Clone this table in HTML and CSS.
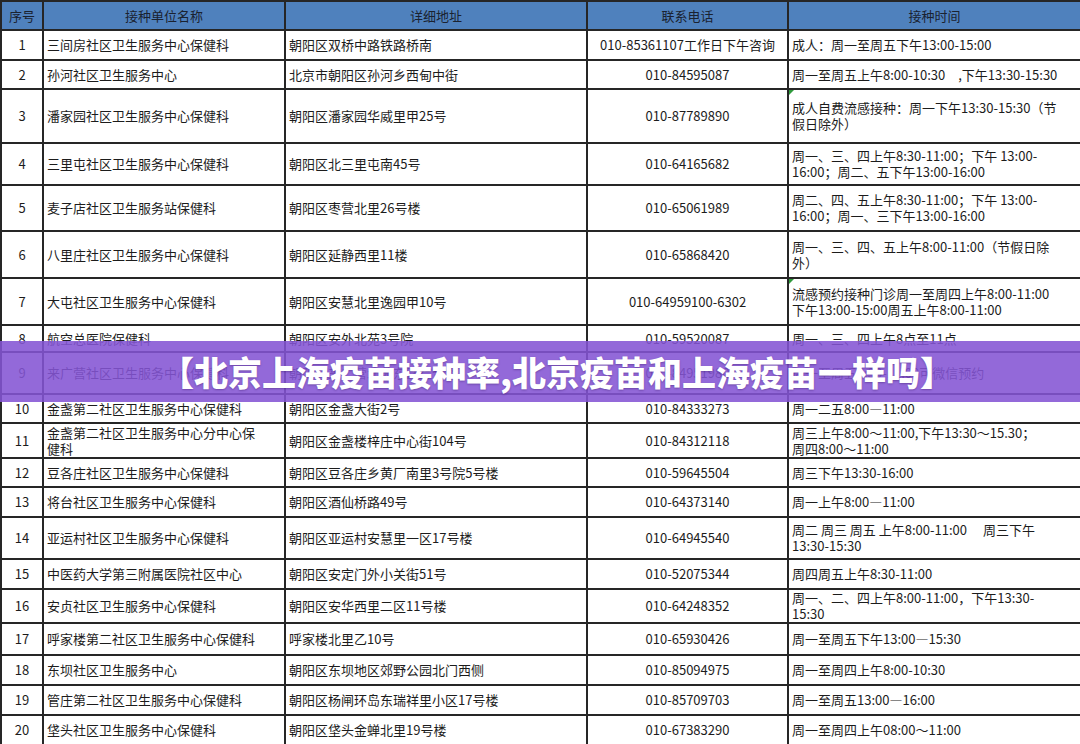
FILE: index.html
```html
<!DOCTYPE html>
<html lang="zh-CN">
<head>
<meta charset="utf-8">
<title>北京上海疫苗接种率</title>
<link rel="stylesheet" href="styles.css">
</head>
<body>
<div class="page">
  <table class="sheet">
    <colgroup>
      <col class="c-no"><col class="c-name"><col class="c-addr"><col class="c-tel"><col class="c-time">
    </colgroup>
    <thead>
      <tr class="h29"><th>序号</th><th>接种单位名称</th><th>详细地址</th><th>联系电话</th><th>接种时间</th></tr>
    </thead>
    <tbody>
      <tr class="h30"><td class="no">1</td><td>三间房社区卫生服务中心保健科</td><td>朝阳区双桥中路铁路桥南</td><td class="tel">010-85361107工作日下午咨询</td><td>成人：周一至周五下午13:00-15:00</td></tr>
      <tr class="h29"><td class="no">2</td><td>孙河社区卫生服务中心</td><td>北京市朝阳区孙河乡西甸中街</td><td class="tel">010-84595087</td><td>周一至周五上午8:00-10:30　,下午13:30-15:30</td></tr>
      <tr class="h54"><td class="no">3</td><td>潘家园社区卫生服务中心保健科</td><td>朝阳区潘家园华威里甲25号</td><td class="tel">010-87789890</td><td class="mark">成人自费流感接种：周一下午13:30-15:30（节<br>假日除外）</td></tr>
      <tr class="h42"><td class="no">4</td><td>三里屯社区卫生服务中心保健科</td><td>朝阳区北三里屯南45号</td><td class="tel">010-64165682</td><td>周一、三、四上午8:30-11:00；下午 13:00-<br>16:00；周二、五下午13:00-16:00</td></tr>
      <tr class="h46"><td class="no">5</td><td>麦子店社区卫生服务站保健科</td><td>朝阳区枣营北里26号楼</td><td class="tel">010-65061989</td><td>周二、四、五上午8:30-11:00；下午 13:00-<br>16:00；周一、三下午13:00-16:00</td></tr>
      <tr class="h47"><td class="no">6</td><td>八里庄社区卫生服务中心保健科</td><td>朝阳区延静西里11楼</td><td class="tel">010-65868420</td><td>周一、三、四、五上午8:00-11:00（节假日除<br>外）</td></tr>
      <tr class="h47"><td class="no">7</td><td>大屯社区卫生服务中心保健科</td><td>朝阳区安慧北里逸园甲10号</td><td class="tel">010-64959100-6302</td><td class="mark">流感预约接种门诊周一至周四上午8:00-11:00<br>下午13:00-15:00周五上午8:00-11:00</td></tr>
      <tr class="h27"><td class="no">8</td><td>航空总医院保健科</td><td>朝阳区安外北苑3号院</td><td class="tel">010-59520087</td><td>周一、三、四上午8点至11点</td></tr>
      <tr class="h42"><td class="no">9</td><td>来广营社区卫生服务中心保健科</td><td>朝阳区来广营北苑东路综合楼</td><td class="tel">010-84951980</td><td>周一至周五8:30-11:00可微信预约</td></tr>
      <tr class="h29"><td class="no">10</td><td>金盏第二社区卫生服务中心保健科</td><td>朝阳区金盏大街2号</td><td class="tel">010-84333273</td><td>周一二五8:00—11:00</td></tr>
      <tr class="h35"><td class="no">11</td><td>金盏第二社区卫生服务中心分中心保<br>健科</td><td>朝阳区金盏楼梓庄中心街104号</td><td class="tel">010-84312118</td><td>周三上午8:00～11:00,下午13:30～15.30；<br>周四8:00～11:00</td></tr>
      <tr class="h29"><td class="no">12</td><td>豆各庄社区卫生服务中心保健科</td><td>朝阳区豆各庄乡黄厂南里3号院5号楼</td><td class="tel">010-59645504</td><td>周三下午13:30-16:00</td></tr>
      <tr class="h30"><td class="no">13</td><td>将台社区卫生服务中心保健科</td><td>朝阳区酒仙桥路49号</td><td class="tel">010-64373140</td><td>周一上午8:00—11:00</td></tr>
      <tr class="h42"><td class="no">14</td><td>亚运村社区卫生服务中心保健科</td><td>朝阳区亚运村安慧里一区17号楼</td><td class="tel">010-64945540</td><td>周二 周三 周五 上午8:00-11:00　 周三下午<br>13:30-15:30</td></tr>
      <tr class="h30"><td class="no">15</td><td>中医药大学第三附属医院社区中心</td><td>朝阳区安定门外小关街51号</td><td class="tel">010-52075344</td><td>周四周五上午8:30-11:00</td></tr>
      <tr class="h32"><td class="no">16</td><td>安贞社区卫生服务中心保健科</td><td>朝阳区安华西里二区11号楼</td><td class="tel">010-64248352</td><td>周一、二、四上午8:00-11:00，下午13:30-<br>15:30</td></tr>
      <tr class="h32"><td class="no">17</td><td>呼家楼第二社区卫生服务中心保健科</td><td>呼家楼北里乙10号</td><td class="tel">010-65930426</td><td>周一至周五下午13:00—15:30</td></tr>
      <tr class="h30"><td class="no">18</td><td>东坝社区卫生服务中心</td><td>朝阳区东坝地区郊野公园北门西侧</td><td class="tel">010-85094975</td><td>周一至周四上午8:00-10:30</td></tr>
      <tr class="h30"><td class="no">19</td><td>管庄第二社区卫生服务中心保健科</td><td>朝阳区杨闸环岛东瑞祥里小区17号楼</td><td class="tel">010-85709703</td><td>周一至周五13:00—16:00</td></tr>
      <tr class="h30"><td class="no">20</td><td>垡头社区卫生服务中心保健科</td><td>朝阳区垡头金蝉北里19号楼</td><td class="tel">010-67383290</td><td>周一至周四上午08:00～11:00</td></tr>
    </tbody>
  </table>
  <div class="banner"><h1 class="banner-title">【北京上海疫苗接种率,北京疫苗和上海疫苗一样吗】</h1></div>
</div>
</body>
</html>
```

FILE: styles.css
```css
html, body {
  margin: 0;
  padding: 0;
  background: #ffffff;
}

.page {
  position: relative;
  width: 1080px;
  height: 744px;
  overflow: hidden;
  font-family: "Noto Sans CJK SC", "Noto Sans", sans-serif;
  color: #1c1c1c;
}

.sheet {
  border-collapse: collapse;
  table-layout: fixed;
  width: 1080px;
  font-size: 13px;
  line-height: 16px;
}

.c-no { width: 42px; }
.c-name { width: 242px; }
.c-addr { width: 302px; }
.c-tel { width: 201px; }
.c-time { width: 293px; }

.sheet th,
.sheet td {
  border: 2px solid #262626;
  padding: 0 3px;
  vertical-align: middle;
  white-space: nowrap;
  overflow: hidden;
  text-align: left;
  font-weight: 400;
}

.sheet th {
  background: #4f81bd;
  color: #1a2230;
  text-align: center;
  font-size: 13px;
}

.sheet td.no,
.sheet td.tel {
  text-align: center;
}

.sheet td.mark {
  position: relative;
}

.sheet td.mark::before {
  content: "";
  position: absolute;
  left: 0;
  top: 0;
  border-top: 5px solid #2f9a3c;
  border-right: 5px solid transparent;
}

.h27 { height: 27px; }
.h29 { height: 29px; }
.h30 { height: 30px; }
.h32 { height: 32px; }
.h35 { height: 35px; }
.h42 { height: 42px; }
.h46 { height: 46px; }
.h47 { height: 47px; }
.h54 { height: 54px; }

.banner {
  position: absolute;
  left: 0;
  top: 341px;
  width: 1080px;
  height: 61px;
  background: rgba(132, 84, 212, 0.88);
  display: flex;
  align-items: center;
  justify-content: center;
}

.banner-title {
  margin: 0;
  padding-left: 34px;
  font-size: 34px;
  font-weight: 900;
  line-height: 1;
  color: #ffffff;
  letter-spacing: 0;
  text-shadow: 0 1px 2px rgba(40, 10, 80, 0.35);
  white-space: nowrap;
}
```
